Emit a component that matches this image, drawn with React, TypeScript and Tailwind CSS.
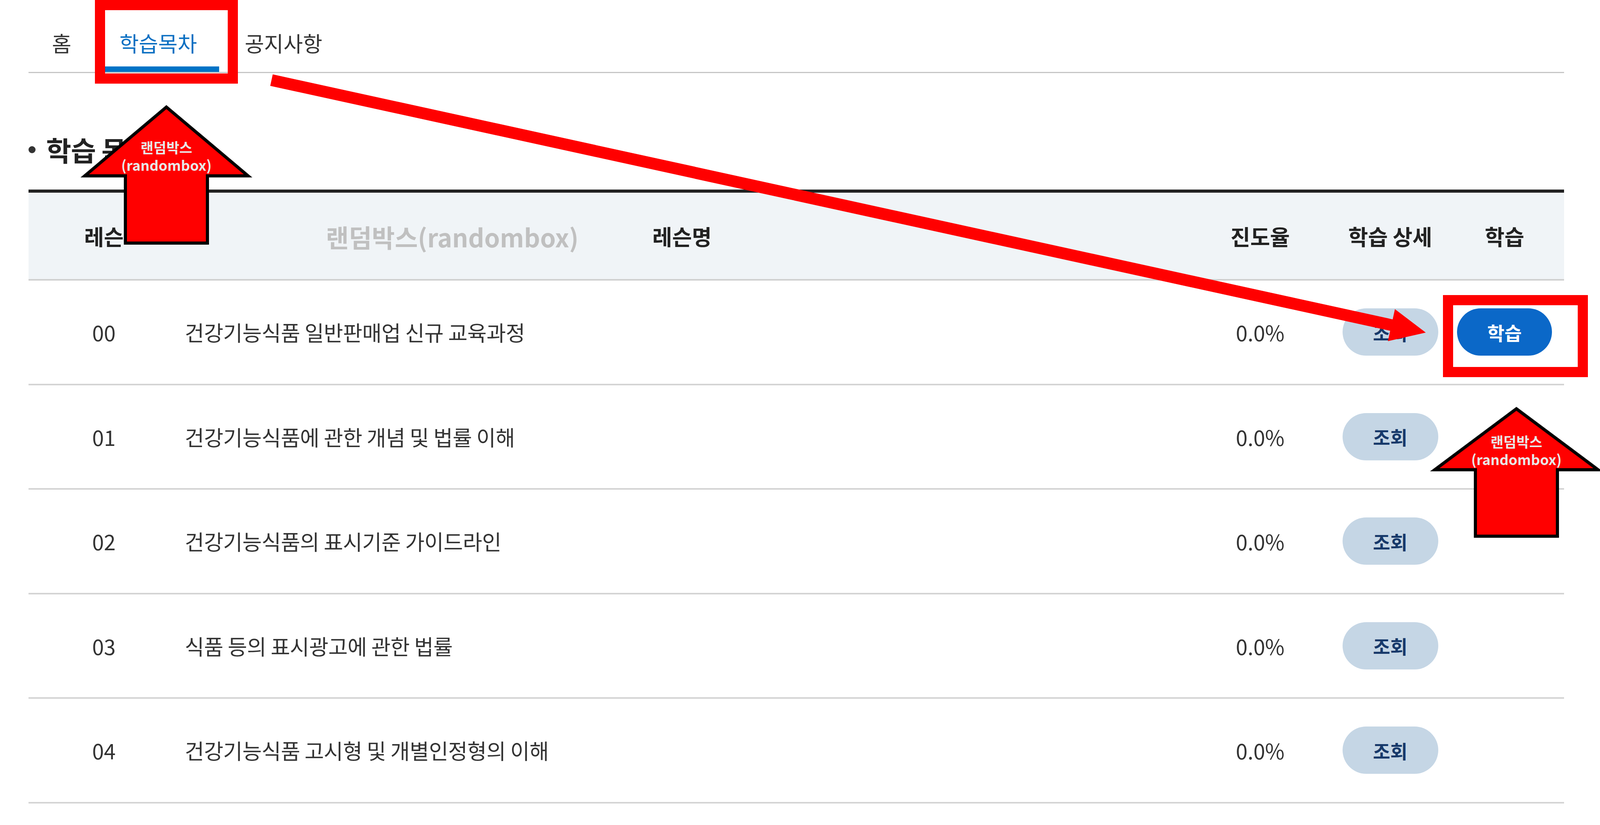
import React from 'react';

interface Lesson {
  no: string;
  title: string;
  progress: string;
  canStudy?: boolean;
}

// 학습 목차 데이터
const LESSONS: Lesson[] = [
  { no: '00', title: '건강기능식품 일반판매업 신규 교육과정', progress: '0.0%', canStudy: true },
  { no: '01', title: '건강기능식품에 관한 개념 및 법률 이해', progress: '0.0%' },
  { no: '02', title: '건강기능식품의 표시기준 가이드라인', progress: '0.0%' },
  { no: '03', title: '식품 등의 표시광고에 관한 법률', progress: '0.0%' },
  { no: '04', title: '건강기능식품 고시형 및 개별인정형의 이해', progress: '0.0%' }
];

const COLS = 'grid grid-cols-[386px_2574px_386px_280px_305px] items-center';

const Tab: React.FC<{ label: string; active?: boolean; className?: string; labelClass?: string }> = ({
  label,
  active = false,
  className = '',
  labelClass = ''
}) => (
  <div className={`flex flex-col pt-[80px] ${className}`}>
    <span
      className={`leading-[60px] text-[54px] whitespace-nowrap ${labelClass} ${
        active ? 'text-[#0a6fc2]' : 'text-[#333]'
      }`}
    >
      {label}
    </span>
    <div className={`mt-auto h-[14px] ${active ? 'bg-[#0073c6]' : ''}`} />
  </div>
);

// 빨간 주석 화살표 (위쪽)
const UpArrow: React.FC<{ cx: number; apex: number; base: number; bottom: number; t1: number; t2: number }> = ({
  cx,
  apex,
  base,
  bottom,
  t1,
  t2
}) => {
  const pts = [
    [cx, apex],
    [cx + 209, base],
    [cx + 105, base],
    [cx + 105, bottom],
    [cx - 105, bottom],
    [cx - 105, base],
    [cx - 209, base]
  ]
    .map((p) => p.join(','))
    .join(' ');
  return (
    <g>
      <polygon points={pts} fill="#ff0000" stroke="#000" strokeWidth={8} strokeLinejoin="miter" />
      <text
        x={cx}
        y={t1}
        textAnchor="middle"
        dominantBaseline="central"
        fill="#e8e8e8"
        fontSize={36}
        fontWeight={700}
        fontFamily="'Noto Sans CJK KR', sans-serif"
      >
        랜덤박스
      </text>
      <text
        x={cx}
        y={t2}
        textAnchor="middle"
        dominantBaseline="central"
        fill="#e8e8e8"
        fontSize={36}
        fontWeight={700}
        fontFamily="'Noto Sans CJK KR', sans-serif"
      >
        (randombox)
      </text>
    </g>
  );
};

const App: React.FC = () => {
  return (
    <div className="relative w-[4123px] h-[2111px] overflow-hidden bg-white font-['Noto_Sans_CJK_KR',sans-serif]">
      <div className="ml-[73px] w-[3931px]">
        {/* 탭 */}
        <nav className="flex h-[187px] border-b-[3px] border-[#c6c6c6]">
          <Tab label="홈" className="ml-[60px]" />
          <Tab label="학습목차" active className="ml-[86px]" labelClass="pl-[37px] pr-[57px]" />
          <Tab label="공지사항" className="ml-[65px]" />
        </nav>

        {/* 제목 */}
        <div className="flex items-center pt-[156px] pb-[62px]">
          <span className="w-[18px] h-[18px] rounded-full bg-[#333]" />
          <h2 className="ml-[27px] leading-[80px] text-[70px] font-bold text-[#222] tracking-[-1px]">
            학습 목차
          </h2>
        </div>

        {/* 표 */}
        <div
          className={`${COLS} h-[233px] border-t-[8px] border-b-[4px] border-t-[#222] border-b-[#d0d0d0] bg-[#f0f4f7] text-[55px] font-bold text-[#222]`}
        >
          <div className="text-center">레슨</div>
          <div className="text-center">레슨명</div>
          <div className="text-center">진도율</div>
          <div className="text-center">학습 상세</div>
          <div className="text-center">학습</div>
        </div>

        {LESSONS.map((lesson) => (
          <div
            key={lesson.no}
            className={`${COLS} h-[267.5px] border-b-[4px] border-[#d4d4d4] text-[54px] text-[#333]`}
          >
            <div className="text-center">{lesson.no}</div>
            <div className="pl-[14px] tracking-[-0.5px]">{lesson.title}</div>
            <div className="text-center">{lesson.progress}</div>
            <div className="flex justify-center">
              <button className="w-[245px] h-[121px] rounded-full bg-[#c5d6e5] text-[48px] font-bold text-[#17396a]">
                조회
              </button>
            </div>
            <div className="flex justify-center">
              {lesson.canStudy && (
                <button className="w-[243px] h-[121px] rounded-full bg-[#0b68c8] text-[48px] font-bold text-white">
                  학습
                </button>
              )}
            </div>
          </div>
        ))}
      </div>

      {/* 헤더 위 회색 주석 */}
      <div className="absolute left-[834px] top-[565px] leading-[80px] text-[64px] font-bold text-[#c0c0c0] whitespace-nowrap">
        랜덤박스(randombox)
      </div>

      {/* 빨간 주석 */}
      <svg
        className="absolute inset-0 pointer-events-none"
        width={4123}
        height={2111}
        viewBox="0 0 4123 2111"
      >
        <rect x={256} y={13} width={340} height={188} fill="none" stroke="#ff0000" strokeWidth={26} />
        <rect x={3707} y={768} width={345} height={184} fill="none" stroke="#ff0000" strokeWidth={26} />
        <line x1={695} y1={205} x2={3572} y2={834} stroke="#ff0000" strokeWidth={30} />
        <polygon points="3650,851 3571,791 3553,873" fill="#ff0000" />
        <UpArrow cx={426} apex={274} base={450} bottom={622} t1={376} t2={421} />
        <UpArrow cx={3882} apex={1046} base={1202} bottom={1372} t1={1129} t2={1174} />
      </svg>
    </div>
  );
};

export default App;
